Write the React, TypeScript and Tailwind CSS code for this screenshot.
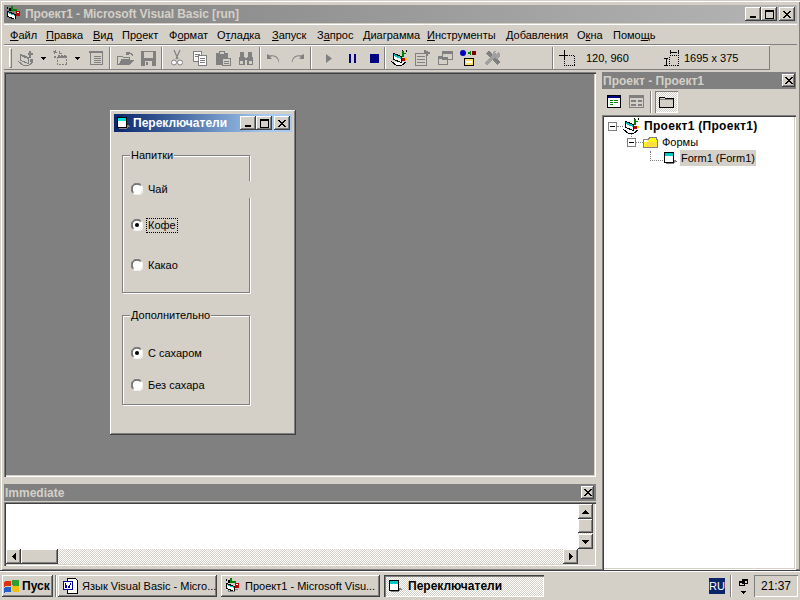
import React from "react";

const FONT = "font-['Liberation_Sans','DejaVu_Sans',sans-serif]";
const RAISED = "bg-[#d4d0c8] shadow-[inset_-1px_-1px_0_#404040,inset_1px_1px_0_#fff,inset_-2px_-2px_0_#808080]";
const SUNKEN = "shadow-[inset_1px_1px_0_#808080,inset_2px_2px_0_#404040,inset_-1px_-1px_0_#fff,inset_-2px_-2px_0_#d4d0c8]";
const DITHER = "bg-[repeating-conic-gradient(#fff_0_25%,#d4d0c8_0_50%)] bg-[length:2px_2px]";

const S = ({ children, w = 16, h = 16, className = "" }: { children: React.ReactNode; w?: number; h?: number; className?: string }) => (
  <svg width={w} height={h} viewBox={`0 0 ${w} ${h}`} shapeRendering="crispEdges" className={`shrink-0 ${className}`}>{children}</svg>
);
const GR = "#808080";

const Arrow = () => <S w={5} h={3}><path d="M0 0h5v1h-1v1h-1v1h-1v-1h-1v-1h-1z" fill="#000" /></S>;
const AddProject = () => (
  <S w={18} h={17}>
    <path d="M1.500 11.500l5 4h5l5-4" fill="#d4d0c8" stroke={GR} />
    <path d="M3.500 4.500l8 3v6l-8-3z" fill="#d4d0c8" stroke={GR} />
    <path d="M4 5l7 3v1l-7-3z" fill={GR} />
    <path d="M12 1h2v2h2v2h-2v3h-2V5h-1V3h1z" fill={GR} />
    <path d="M13 9h3v3h-3z" fill={GR} />
  </S>
);
const AddForm = () => <S><path d="M4.500 5.500h9v9h-9z" fill="#d4d0c8" stroke={GR} strokeDasharray="2 1" /><path d="M2 0h1v2h1v1H2v1H1V2H0V1h2zM6 1h1v2h2v1H6zM1 6h2v2H1z" fill={GR} /><path d="M5 6h8v2H5z" fill={GR} /></S>;
const MenuEd = () => <S><path d="M2.500 1.500h12v13h-12z" fill="#d4d0c8" stroke={GR} /><path d="M1 1h14v2H1zM6 6h7v1H6zM6 8h7v1H6zM6 10h7v1H6zM6 12h7v1H6z" fill={GR} /></S>;
const Open = () => <S w={17} h={15}><path d="M.5 5.500h5l1 1h6v2H5l-3 5H.5z" fill="#d4d0c8" stroke={GR} /><path d="M5 9h12l-4 5H1z" fill={GR} /><path d="M9 1h4v1h2v1h1v2h-1V4h-1V3h-2v1H9z" fill={GR} /></S>;
const Save = () => <S w={15} h={15}><path d="M0 0h15v15H0z" fill={GR} /><path d="M3 1h9v6H3z" fill="#d4d0c8" /><path d="M4 10h7v5H4z" fill="#d4d0c8" /><path d="M5 11h2v3H5z" fill={GR} /></S>;
const Cut = () => <S w={14} h={16}><path d="M4 0l4 9M10 0L6 9" stroke={GR} fill="none" strokeWidth="1.2" shapeRendering="auto" /><circle cx="4" cy="12.500" r="2.500" fill="#fff" stroke={GR} shapeRendering="auto" /><circle cx="10" cy="12.500" r="2.500" fill="#fff" stroke={GR} shapeRendering="auto" /></S>;
const Copy = () => <S><path d="M1.500 1.500h8v10h-8z" fill="#fff" stroke={GR} /><path d="M6.500 5.500h8v10h-8z" fill="#fff" stroke={GR} /><path d="M3 4h5v1H3zM3 6h3v1H3zM8 8h5v1H8zM8 10h5v1H8zM8 12h5v1H8z" fill={GR} /></S>;
const Paste = () => <S><path d="M1 3h12v12H1z" fill={GR} /><path d="M4.500 1.500h5v3h-5z" fill="#d4d0c8" stroke={GR} /><path d="M7.500 8.500h8v7h-8z" fill="#d4d0c8" stroke={GR} /><path d="M9 11h5v1H9zM9 13h5v1H9z" fill={GR} /></S>;
const Find = () => <S><path d="M2 2h4v4l1 2h2l1-2V2h4v2l1 6v5h-6V10H7v5H1v-5l1-6z" fill={GR} /><path d="M2 11h3v3H2zM11 11h3v3h-3z" fill="#d4d0c8" /></S>;
const Undo = () => <S w={15} h={11}><path d="M1 1v5h5L4 4c2-1.500 6-1 8 3l1 3c1-5-4-9-9-7.500z" fill={GR} shapeRendering="auto" /></S>;
const Redo = () => <S w={15} h={11}><g transform="matrix(-1 0 0 1 15 0)"><path d="M1 1v5h5L4 4c2-1.500 6-1 8 3l1 3c1-5-4-9-9-7.500z" fill={GR} shapeRendering="auto" /></g></S>;
const Play = () => <S w={6} h={9}><path d="M0 0l6 4.500L0 9z" fill={GR} shapeRendering="auto" /></S>;
const Pause = () => <S w={7} h={9}><path d="M0 0h2v9H0zM5 0h2v9H5z" fill="#000080" /></S>;
const Stop = () => <S w={9} h={9}><path d="M0 0h9v9H0z" fill="#000080" /></S>;
const Explorer = () => (
  <S w={17} h={17}>
    <path d="M.5 11.500l5 4h5l5-4" fill="#fff" stroke="#000" />
    <path d="M2.500 3.500l8 3v6l-8-3z" fill="#fff" stroke="#000" />
    <path d="M3 4l7 3v2l-7-3z" fill="#00c8c8" />
    <path d="M11 1h2v2h2v1h-2v3h-2z" fill="#008000" />
    <path d="M15 0h1v2h-1zM11 0h1v1h-1z" fill="#000" />
    <path d="M11 8h3v3h-3z" fill="#c00000" />
    <path d="M14 8h2v2h-2z" fill="#ffe000" />
  </S>
);
const Props = () => <S><path d="M1.500 3.500h11v12h-11z" fill="#d4d0c8" stroke={GR} /><path d="M3 6h8v1H3zM3 9h8v1H3zM3 12h8v1H3z" fill={GR} /><path d="M10 0h2v1h2v1h2v2h-2v2h-2V4h-2z" fill={GR} /></S>;
const Layout = () => <S><path d="M1.500 6.500h9v8h-9z" fill="#d4d0c8" stroke={GR} /><path d="M5.500 1.500h10v8h-10z" fill="#d4d0c8" stroke={GR} /><path d="M5 2h11v2H5zM1 7h10v2H1z" fill={GR} /></S>;
const Browser = () => <S w={17} h={17}><circle cx="3" cy="3" r="3" fill="#0000c0" shapeRendering="auto" /><path d="M12 1h4v4h-4z" fill="#800000" /><path d="M7 3l4-2v4z" fill="#008000" /><path d="M4 8h10v8H4z" fill="#000" /><path d="M5 9h8v6H5z" fill="#ffe060" /><path d="M6 11h6v2H6z" fill="#fff" /></S>;
const Tools = () => <S><path d="M2 3l3-2 2 1 9 10-3 3L4 6z" fill={GR} /><path d="M15 1l-2 3-2-1 1-2h-2L8 5 1 12v2l2 1 7-7 3 1 3-3V4z" fill="#a0a0a0" /></S>;
const PosIcon = () => <S><path d="M5 0v9M0 5h9" stroke="#000" fill="none" /><path d="M5.500 5.500h10v10h-10z" fill="none" stroke="#000" strokeDasharray="1 1" /></S>;
const SizeIcon = () => <S><path d="M6.500 5.500h9v10h-9z" fill="none" stroke="#000" strokeDasharray="1 1" /><path d="M7.500 0v4M15.500 0v4M8 2.500h6M1 8.500h4M1 15.500h4M3.500 9v6" stroke="#000" fill="none" /></S>;

const XGlyph = () => <S w={8} h={7}><path d="M0 0h2v1h1v1h2V1h1V0h2v1H7v1H6v1H5v1h1v1h1v1h1v1H6V6H5V5H3v1H2v1H0V6h1V5h1V4h1V3H2V2H1V1H0z" fill="#000" /></S>;
const MaxGlyph = () => <S w={9} h={9}><path d="M0 0h9v2H0zM0 2h1v7H0zM8 2h1v7H8zM0 8h9v1H0z" fill="#000" /></S>;
const MinGlyph = () => <S w={6} h={2}><path d="M0 0h6v2H0z" fill="#000" /></S>;
const TitleBtn = ({ children, className = "" }: { children: React.ReactNode; className?: string }) => (
  <div className={`${RAISED} w-4 h-[14px] flex items-center justify-center ${className}`}>{children}</div>
);
const WinBtns = () => (
  <div className="flex items-center">
    <TitleBtn><div className="mt-[6px] -ml-px"><MinGlyph /></div></TitleBtn>
    <TitleBtn><MaxGlyph /></TitleBtn>
    <TitleBtn className="ml-[2px]"><XGlyph /></TitleBtn>
  </div>
);

const AppIcon = () => (
  <S>
    <path d="M1.500 5.500l8 3v5l-8-3z" fill="#fff" stroke="#000" />
    <path d="M2 6l7 3v1l-7-3z" fill="#00c8c8" />
    <path d="M3 2h2v3H3zM1 1h1v2H1z" fill="#000" />
    <path d="M5 0h2v3h4v2H5z" fill="#008000" />
    <path d="M10 5h4v5h-4z" fill="#c00000" />
    <path d="M11 6h2v1h-2z" fill="#fff" />
    <path d="M3 12h1v1h6v1H3zM10 11h3v1h-3z" fill="#808080" />
  </S>
);
const FormIcon = ({ dark = false }: { dark?: boolean }) => (
  <S w={14} h={13}>
    <path d="M1.500 .5h9v10h-9z" fill={dark ? "#fff" : "#fff"} stroke="#000" />
    <path d="M2 1h8v3H2z" fill={dark ? "#00e0e0" : "#00c8c8"} />
    <path d="M11 8h2v1h1v1h-2v1h-1zM3 11h8v1H3z" fill="#808080" />
  </S>
);

const MENU: { t: string; u: number; w: string }[] = [
  { t: "Файл", u: 0, w: "w-[36px]" },
  { t: "Правка", u: 0, w: "w-[47px]" },
  { t: "Вид", u: 0, w: "w-[29px]" },
  { t: "Проект", u: 2, w: "w-[47px]" },
  { t: "Формат", u: 1, w: "w-[48px]" },
  { t: "Отладка", u: 1, w: "w-[55px]" },
  { t: "Запуск", u: 0, w: "w-[45px]" },
  { t: "Запрос", u: 1, w: "w-[46px]" },
  { t: "Диаграмма", u: 0, w: "w-[64px]" },
  { t: "Инструменты", u: 0, w: "w-[79px]" },
  { t: "Добавления", u: 0, w: "w-[71px]" },
  { t: "Окна", u: 1, w: "w-[36px]" },
  { t: "Помощь", u: 4, w: "w-[45px]" },
];

const Sep = ({ className = "" }: { className?: string }) => <div className={`w-[2px] h-[22px] border-l border-l-[#808080] border-r border-r-white shrink-0 ${className}`} />;

const Radio = ({ on = false }: { on?: boolean }) => (
  <svg width="12" height="12" viewBox="0 0 12 12" className="shrink-0">
    <circle cx="6" cy="6" r="5.500" fill="#fff" />
    <path d="M1.800 10.200A5.500 5.500 0 0 1 10.200 1.800" fill="none" stroke="#808080" strokeWidth="1" />
    <path d="M2.500 9.500A4.600 4.600 0 0 1 9.500 2.500" fill="none" stroke="#404040" strokeWidth="1" />
    <path d="M2.500 10.500A5.500 5.500 0 0 0 10.500 2.500" fill="none" stroke="#fff" strokeWidth="1" />
    {on && <circle cx="6" cy="6" r="2" fill="#000" />}
  </svg>
);

const Opt = ({ label, on, focus, className = "" }: { label: string; on?: boolean; focus?: boolean; className?: string }) => (
  <div className={`flex items-center h-[14px] pl-[8px] ${className}`}>
    <Radio on={on} />
    <span className={`ml-[4px] px-px leading-[13px] ${focus ? "outline-1 outline-dotted outline-black" : ""}`}>{label}</span>
  </div>
);

const Frame = ({ title, className, children }: { title: string; className: string; children: React.ReactNode }) => (
  <div className={`relative w-[128px] border border-[#808080] shadow-[1px_1px_0_#fff,inset_1px_1px_0_#fff] ${className}`}>
    <span className="absolute -top-[7px] left-[7px] px-[1px] bg-[#d4d0c8] leading-[13px]">{title}</span>
    {children}
  </div>
);

const Sb = ({ children, className = "" }: { children?: React.ReactNode; className?: string }) => (
  <div className={`${RAISED} w-[15px] h-[15px] flex items-center justify-center shrink-0 ${className}`}>{children}</div>
);

const TaskBtn = ({ icon, label, w }: { icon: React.ReactNode; label: string; w: string }) => (
  <div className={`${RAISED} ${w} h-[22px] flex items-center pl-1 gap-1 overflow-hidden whitespace-nowrap`}>
    {icon}<span>{label}</span>
  </div>
);

const Expander = () => (
  <div className="w-[9px] h-[9px] border border-[#808080] bg-white flex items-center justify-center shrink-0"><div className="w-[5px] h-px bg-black" /></div>
);

export default function App() {
  return (
    <div className={`${FONT} w-[800px] h-[600px] overflow-hidden bg-[#d4d0c8] text-[11px] text-black flex flex-col select-none`}>
      {/* Main window */}
      <div className="h-[570px] flex flex-col shrink-0 border-t border-t-[#d4d0c8] border-l border-l-[#d4d0c8] shadow-[inset_1px_1px_0_#fff,inset_-1px_-1px_0_#808080,0_1px_0_#404040] px-[4px] pt-[4px]">
        <div className="h-[18px] -mx-px flex items-center bg-gradient-to-r from-[#808080] to-[#b5b5b5] pl-[2px] pr-[2px] shrink-0">
          <AppIcon />
          <span className="ml-[3px] font-bold text-[#d4d0c8] text-[12px] tracking-[-0.1px] whitespace-nowrap">Проект1 - Microsoft Visual Basic [run]</span>
          <div className="ml-auto"><WinBtns /></div>
        </div>
        {/* Menu */}
        <div className="h-[21px] mt-[1px] pt-[2px] -mx-px flex items-center pl-[6px] border-t border-t-white border-b border-b-[#808080] shrink-0">
          {MENU.map((m) => (
            <span key={m.t} className={`${m.w} shrink-0 whitespace-nowrap`}>
              {m.t.slice(0, m.u)}<u>{m.t[m.u]}</u>{m.t.slice(m.u + 1)}
            </span>
          ))}
        </div>
        {/* Toolbar */}
        <div className="h-[25px] -mx-px flex items-center shrink-0 w-[766px] border-t border-t-white pl-[5px] shadow-[inset_-1px_-1px_0_#808080]">
          <div className="w-[3px] h-[20px] border border-[#808080] border-l-white border-t-white mr-[5px] shrink-0" />
          <AddProject /><div className="ml-[6px] mr-[7px]"><Arrow /></div>
          <AddForm /><div className="ml-[6px] mr-[8px]"><Arrow /></div>
          <MenuEd /><Sep className="mx-[5px]" />
          <div className="ml-[1px]"><Open /></div><div className="ml-[7px]"><Save /></div><Sep className="mx-[5px]" />
          <div className="ml-[2px]"><Cut /></div><div className="ml-[8px]"><Copy /></div><div className="ml-[7px]"><Paste /></div><div className="ml-[7px]"><Find /></div><Sep className="mx-[5px]" />
          <Undo /><div className="ml-[9px]"><Redo /></div><Sep className="ml-[5px]" />
          <div className="ml-[14px]"><Play /></div><div className="ml-[17px]"><Pause /></div><div className="ml-[14px]"><Stop /></div><Sep className="ml-[5px]" />
          <div className="ml-[5px]"><Explorer /></div><div className="ml-[6px]"><Props /></div><div className="ml-[7px]"><Layout /></div><div className="ml-[7px]"><Browser /></div><div className="ml-[7px]"><Tools /></div>
          <Sep className="ml-[52px]" />
          <div className="ml-[5px]"><PosIcon /></div><span className="ml-[11px] w-[77px]">120, 960</span>
          <SizeIcon /><span className="ml-[5px]">1695 x 375</span>
        </div>
        {/* Body */}
        <div className="flex-1 min-h-0 flex mt-[2px]">
          {/* Left column */}
          <div className="w-[592px] -ml-px flex flex-col shrink-0">
            <div className={`relative h-[405px] bg-[#808080] ${SUNKEN} shrink-0`}>
              {/* MDI child form */}
              <div className="absolute left-[106px] top-[38px] w-[186px] h-[325px] bg-[#d4d0c8] pt-[4px] px-[4px] shadow-[inset_-1px_-1px_0_#404040,inset_1px_1px_0_#fff,inset_-2px_-2px_0_#808080]">
                <div className="h-[18px] flex items-center bg-gradient-to-r from-[#0a246a] to-[#a6caf0] to-[85%] pl-[2px] pr-[2px]">
                  <FormIcon dark />
                  <span className="ml-[3px] font-bold text-white text-[12px] whitespace-nowrap">Переключатели</span>
                  <div className="ml-auto"><WinBtns /></div>
                </div>
                <div className="pl-[8px]">
                  <Frame title="Напитки" className="mt-[23px] h-[138px]">
                    <div className="absolute -right-[2px] top-[25px] w-[3px] h-[17px] bg-[#d4d0c8]" />
                    <Opt label="Чай" className="mt-[26px]" />
                    <Opt label="Кофе" on focus className="mt-[22px]" />
                    <Opt label="Какао" className="mt-[26px]" />
                  </Frame>
                  <Frame title="Дополнительно" className="mt-[22px] h-[90px]">
                    <Opt label="С сахаром" on className="mt-[30px]" />
                    <Opt label="Без сахара" className="mt-[18px]" />
                  </Frame>
                </div>
              </div>
            </div>
            {/* Immediate */}
            <div className="h-[17px] mt-[7px] bg-[#808080] flex items-center pr-[2px] shrink-0">
              <span className="font-bold text-[#d4d0c8] text-[12px] pl-px">Immediate</span>
              <div className="ml-auto"><div className={`${RAISED} w-[13px] h-[13px] flex items-center justify-center`}><XGlyph /></div></div>
            </div>
            <div className={`relative mt-px h-[64px] ${SUNKEN} bg-[#d4d0c8] pl-[2px] pt-[2px] pb-[2px] pr-[3px] shrink-0 flex flex-col`}>
              <div className="flex-1 flex min-h-0">
                <div className="flex-1 bg-white" />
                <div className="w-[15px] flex flex-col">
                  <Sb><S w={7} h={4}><path d="M3 0h1v1h1v1h1v1h1v1H0V3h1V2h1V1h1z" /></S></Sb>
                  <div className={`${RAISED} h-[14px]`} />
                  <div className={`flex-1 ${DITHER}`} />
                  <Sb><S w={7} h={4}><path d="M0 0h7v1H6v1H5v1H4v1H3V3H2V2H1V1H0z" /></S></Sb>
                </div>
              </div>
              <div className="flex h-[15px] shrink-0">
                <Sb><S w={4} h={7}><path d="M3 0h1v7H3V6H2V5H1V4H0V3h1V2h1V1h1z" /></S></Sb>
                <div className={`${RAISED} w-[37px]`} />
                <div className={`flex-1 ${DITHER}`} />
                <Sb><S w={4} h={7}><path d="M0 0h1v1h1v1h1v1h1v1H3v1H2v1H1v1H0z" /></S></Sb>
                <div className="w-[15px]" />
              </div>
            </div>
          </div>
          {/* Right column */}
          <div className="w-[194px] ml-[6px] flex flex-col shrink-0">
            <div className="h-[17px] bg-[#808080] flex items-center pr-[1px] shrink-0">
              <span className="font-bold text-[#d4d0c8] text-[12px] pl-px">Проект - Проект1</span>
              <div className="ml-auto"><div className={`${RAISED} w-[13px] h-[13px] flex items-center justify-center`}><XGlyph /></div></div>
            </div>
            <div className="h-[25px] flex items-center pl-[5px] shrink-0">
              <S w={14} h={13}><path d="M.5.5h13v12H.5z" fill="#fff" stroke="#000" /><path d="M1 1h12v2H1z" fill="#000080" /><path d="M3 5h3v1H3zM7 5h4v1H7zM3 7h3v1H3zM7 7h4v1H7zM3 9h3v1H3z" fill="#008000" /></S>
              <div className="ml-[8px]"><S w={16} h={13}><path d="M.5.5h14v12H.5z" fill="#d4d0c8" stroke={GR} /><path d="M1 1h13v2H1zM2 5h5v2H2zM9 5h4v2H9zM2 9h5v2H2zM9 9h4v2H9z" fill={GR} /></S></div>
              <Sep className="ml-[5px]" />
              <div className={`ml-[3px] w-[23px] h-[22px] flex items-center justify-center ${DITHER} shadow-[inset_1px_1px_0_#808080,inset_-1px_-1px_0_#fff]`}>
                <S w={16} h={12}><path d="M.5 2.500V1.500h5l1 1h8v9H.5z" fill="#d4d0c8" stroke="#000" /><path d="M1 3h13v1H1z" fill="#808080" /></S>
              </div>
            </div>
            <div className={`flex-1 bg-white ${SUNKEN} pt-[3px] mt-[1px] relative`}>
              <div className="flex items-center h-[16px] pl-[6px]">
                <Expander />
                <div className="w-[6px] border-t border-dotted border-[#808080]" />
                <Explorer />
                <span className="ml-[4px] font-bold text-[12px] tracking-[0.3px] whitespace-nowrap">Проект1 (Проект1)</span>
              </div>
              <div className="absolute left-[29px] top-[19px] h-[5px] border-l border-dotted border-[#808080]" />
              <div className="flex items-center h-[16px] pl-[25px]">
                <Expander />
                <div className="w-[7px] border-t border-dotted border-[#808080]" />
                <S w={16} h={13}><path d="M.5 3.500h5l1-2h7v2h1v8H.5z" fill="#ffff00" stroke="#808080" /><path d="M3 6h11v5H2z" fill="#ffe040" /><path d="M1 4h4v2H1z" fill="#fff" /></S>
                <span className="ml-[3px]">Формы</span>
              </div>
              <div className="absolute left-[48px] top-[36px] w-[13px] h-[10px] border-b border-l border-dotted border-[#808080]" />
              <div className="flex items-center h-[16px] pl-[61px]">
                <FormIcon />
                <span className="ml-[3px] px-[1px] bg-[#d4d0c8] h-[16px] leading-[16px]">Form1 (Form1)</span>
              </div>
            </div>
          </div>
        </div>
      </div>
      {/* Taskbar */}
      <div className="flex-1 flex items-center pl-[2px] pr-[2px] border-t border-t-white mt-[1px]">
        <div className={`${RAISED} w-[51px] h-[22px] flex items-center pl-[2px] font-bold text-[12px] shrink-0`}>
          <S w={17} h={15}><path d="M0 3l1-1h6v5H1l-1 1z" fill="#e03010" /><path d="M8 1h6l1 1v5h-6l-1-1z" fill="#30a030" /><path d="M0 9l1-1h6v5H1l-1 1z" fill="#2060d0" /><path d="M8 7h6l1 1v5h-6l-1-1z" fill="#f0c010" /></S>
          <span className="ml-[1px]">Пуск</span>
        </div>
        <div className="w-[2px] h-[22px] border-l border-l-[#808080] border-r border-r-white ml-[2px] mr-[1px] shrink-0" />
        <TaskBtn w="w-[159px]" label="Язык Visual Basic - Micro..." icon={<S w={16} h={16}><path d="M5.500 .5h8l2 2v13h-10z" fill="#fff" stroke="#000" /><path d="M1 3h10v9H1z" fill="#0000a0" /><path d="M2 4h8v7H2z" fill="#fff" /><path d="M3 5h1l1 4 1-3 1 3 1-4h1l-1.500 5h-1l-1-3-1 3h-1z" fill="#0000a0" /></S>} />
        <div className="w-[4px] shrink-0" />
        <TaskBtn w="w-[159px]" label="Проект1 - Microsoft Visu..." icon={<AppIcon />} />
        <div className="w-[4px] shrink-0" />
        <div className={`w-[160px] h-[22px] flex items-center pl-[4px] font-bold text-[12px] whitespace-nowrap ${DITHER} shadow-[inset_1px_1px_0_#404040,inset_2px_2px_0_#808080,inset_-1px_-1px_0_#fff]`}>
          <FormIcon /><span className="ml-[6px]">Переключатели</span>
        </div>
        <div className="ml-auto w-[16px] h-[16px] bg-[#0a246a] text-white text-[11px] flex items-center justify-center shrink-0">RU</div>
        <div className="w-[2px] h-[22px] border-l border-l-[#808080] border-r border-r-white ml-[5px] shrink-0" />
        <div className="w-[18px] h-[22px] flex flex-col items-center justify-center gap-[5px] ml-[2px]">
          <S w={9} h={7}><path d="M3.500 .5h5v4h-5zM.5 2.500h5v4h-5z" fill="#d4d0c8" stroke="#000" /><path d="M3 0h6v2H3zM0 2h6v2H0z" fill="#000" /></S>
          <Arrow />
        </div>
        <div className="ml-[2px] w-[44px] h-[22px] flex items-center justify-center text-[12px] shadow-[inset_1px_1px_0_#808080,inset_-1px_-1px_0_#fff] shrink-0">21:37</div>
      </div>
    </div>
  );
}
